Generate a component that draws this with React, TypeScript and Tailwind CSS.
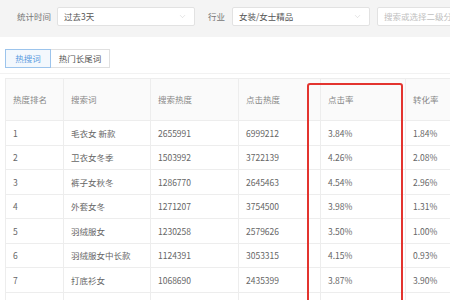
import { ChevronDown } from 'lucide-react';

const rows = [
  { rank: '1', word: '毛衣女 新款', search: '2655991', click: '6999212', ctr: '3.84%', cvr: '1.84%' },
  { rank: '2', word: '卫衣女冬季', search: '1503992', click: '3722139', ctr: '4.26%', cvr: '2.08%' },
  { rank: '3', word: '裤子女秋冬', search: '1286770', click: '2645463', ctr: '4.54%', cvr: '2.96%' },
  { rank: '4', word: '外套女冬', search: '1271207', click: '3754500', ctr: '3.98%', cvr: '1.31%' },
  { rank: '5', word: '羽绒服女', search: '1230258', click: '2579626', ctr: '3.50%', cvr: '1.00%' },
  { rank: '6', word: '羽绒服女中长款', search: '1124391', click: '3053315', ctr: '4.15%', cvr: '0.93%' },
  { rank: '7', word: '打底衫女', search: '1068690', click: '2435399', ctr: '3.87%', cvr: '3.90%' },
  { rank: '8', word: '针织衫女秋冬', search: '1057188', click: '2711084', ctr: '3.72%', cvr: '1.64%' },
];

const cols = ['w-[58px]', 'w-[87px]', 'w-[88px]', 'w-[82px]', 'w-[85px]', 'w-[80px]'];

function Select({ value, className }: { value: string; className: string }) {
  return (
    <div className={`shrink-0 h-[19px] bg-white border border-[#e2e2e2] rounded-[2px] flex items-center justify-between pl-[6px] pr-[7px] ${className}`}>
      <span className="text-[#555]">{value}</span>
      <ChevronDown size={9} strokeWidth={1.2} className="text-[#c4c4c4]" />
    </div>
  );
}

export default function App() {
  return (
    <div
      className="w-[450px] h-[300px] overflow-hidden bg-white relative text-[8.5px] leading-none"
      style={{ fontFamily: '"Noto Sans CJK SC", "Noto Sans", sans-serif' }}
    >
      <div className="h-[37px] bg-[#f4f4f4] flex items-start pt-[7px] whitespace-nowrap">
        <span className="shrink-0 ml-[17px] mt-[5px] text-[#777] w-[40px]">统计时间</span>
        <Select value="过去3天" className="w-[138px]" />
        <span className="shrink-0 ml-[13px] mt-[5px] text-[#777] w-[24px]">行业</span>
        <Select value="女装/女士精品" className="w-[138px]" />
        <div className="shrink-0 ml-[7px] h-[19px] w-[90px] bg-white border border-[#e2e2e2] rounded-[2px] flex items-center pl-[6px]">
          <span className="text-[#c0c0c0]">搜索或选择二级分类</span>
        </div>
      </div>

      <div className="flex ml-[5px] mt-[12px] h-[19px]">
        <div className="w-[46px] border border-[#9cc4ec] bg-[#f3f8fd] text-[#5b9be0] flex items-center justify-center">热搜词</div>
        <div className="w-[59px] border border-l-0 border-[#e0e0e0] text-[#555] flex items-center justify-center">热门长尾词</div>
      </div>

      <div className="mt-[5px] border-t border-[#f2f2f2]" />

      <div className="ml-[5px] mt-[4px] border-l border-t border-[#ededed] whitespace-nowrap">
        <div className="flex h-[42px] bg-[#fafafa] text-[#888] border-b border-[#ededed]">
          {['热度排名', '搜索词', '搜索热度', '点击热度', '点击率', '转化率'].map((h, i) => (
            <div key={h} className={`${cols[i]} shrink-0 border-r border-[#ededed] flex items-center pl-[7px]`}>{h}</div>
          ))}
        </div>
        {rows.map(r => (
          <div key={r.rank} className="flex h-[24.5px] text-[#666] border-b border-[#ededed]">
            {[r.rank, r.word, r.search, r.click, r.ctr, r.cvr].map((v, i) => (
              <div key={i} className={`${cols[i]} shrink-0 border-r border-[#ededed] flex items-center pl-[7px]`}>{v}</div>
            ))}
          </div>
        ))}
      </div>

      <div className="absolute left-[307px] top-[83px] w-[96px] h-[240px] border-2 border-[#e3342f] rounded-[3px]" />
    </div>
  );
}
